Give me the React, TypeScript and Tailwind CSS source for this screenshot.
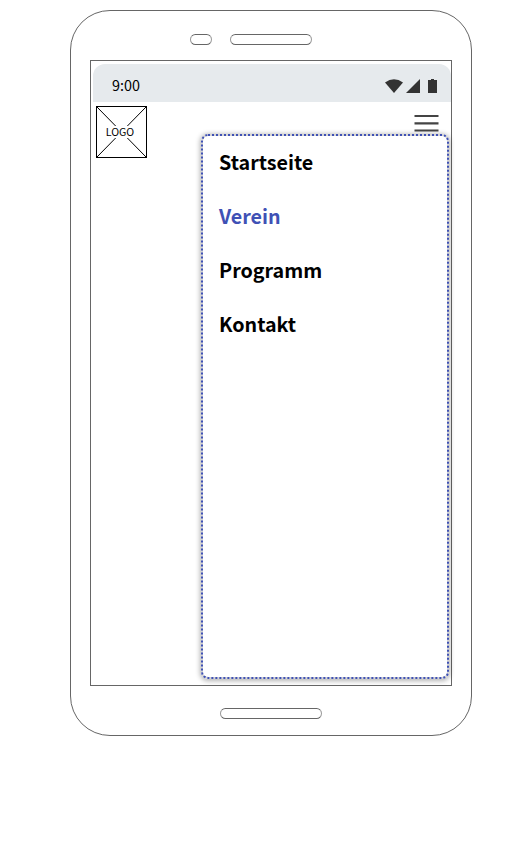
const menuItems = [
  { label: 'Startseite', active: false },
  { label: 'Verein', active: true },
  { label: 'Programm', active: false },
  { label: 'Kontakt', active: false },
];

function StatusBar() {
  return (
    <div className="ml-0.5 mt-[3px] flex h-[38px] shrink-0 items-start justify-between rounded-t-xl bg-[#e6eaed] pl-[19px] pr-[13px]">
      <span className="mt-[11px] text-[14.4px] leading-5 text-black">9:00</span>
      <div className="mt-[14px] flex h-4">
        <svg width="54" height="16" viewBox="0 0 54 16" fill="#333">
          <path d="M1 4.5Q10 -2 19 4.5L10 15Z" />
          <path d="M22 15L36 1V15Z" />
          <path d="M44 2H47V1H50V2H53V15H44Z" />
        </svg>
      </div>
    </div>
  );
}

function Logo() {
  return (
    <div className="grid h-[52px] w-[51px] place-items-center border border-black bg-white">
      <svg className="col-start-1 row-start-1" width="49" height="50" viewBox="0 0 49 50" stroke="black" strokeWidth="1">
        <path d="M0 0L49 50M49 0L0 50" />
      </svg>
      <span className="col-start-1 row-start-1 mr-[3px] bg-white text-[10.6px] leading-[12px] text-black">LOGO</span>
    </div>
  );
}

function Menu() {
  return (
    <nav className="ml-[110px] mr-0.5 -mt-6 h-[545px] w-[248px] shrink-0 rounded-[7px] border-2 border-dotted border-[#3f51b5] pl-4 pt-[11px] shadow-[0_1px_5px_1px_rgba(0,0,0,0.3)] [background:linear-gradient(white,white)_padding-box,linear-gradient(#d4d4d4,#d4d4d4)_border-box]">
      <ul className="flex flex-col gap-6">
        {menuItems.map((item) => (
          <li
            key={item.label}
            className={`text-[19.7px] font-bold leading-[30px] ${item.active ? 'text-[#3f51b5]' : 'text-black'}`}
          >
            {item.label}
          </li>
        ))}
      </ul>
    </nav>
  );
}

export default function App() {
  return (
    <div className="h-[845px] w-[522px] overflow-hidden bg-white pl-[70px] pt-[10px] font-['Noto_Sans_CJK_SC',sans-serif]">
      <div className="flex h-[726px] w-[402px] flex-col rounded-[40px] border border-[#666]">
        <div className="ml-[119px] mt-[23px] flex gap-[18px]">
          <div className="h-[11px] w-[22px] rounded-full border border-[#666] border-x-[#999]" />
          <div className="h-[11px] w-[82px] rounded-full border border-[#666] border-x-[#999]" />
        </div>
        <div className="ml-[19px] mt-[15px] flex h-[626px] w-[362px] shrink-0 flex-col border border-[#666]">
          <StatusBar />
          <div className="flex h-14 shrink-0 items-start justify-between pl-[5px] pr-3 pt-1">
            <Logo />
            <svg className="mt-2" width="25" height="20" viewBox="0 0 25 20" stroke="#444" strokeWidth="2.2">
              <path d="M0.5 2H24.5M0.5 9.3H24.5M0.5 16.5H24.5" />
            </svg>
          </div>
          <Menu />
        </div>
        <div className="ml-[149px] mt-[22px] h-[11px] w-[102px] rounded-full border border-[#666] border-x-[#999]" />
      </div>
    </div>
  );
}
